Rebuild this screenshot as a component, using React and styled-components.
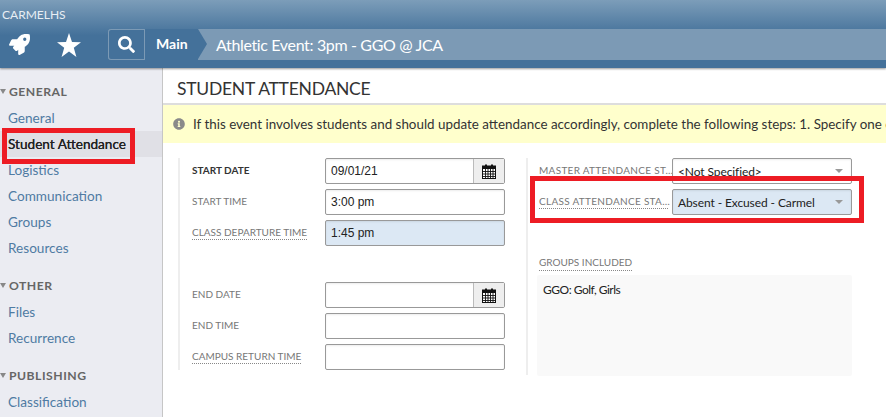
import React from "react";
import styled, { createGlobalStyle } from "styled-components";
import { FaRocket, FaSearch, FaInfoCircle } from "react-icons/fa";

const GlobalStyle = createGlobalStyle`
  html, body {
    margin: 0;
    padding: 0;
    height: 100%;
    overflow: hidden;
    background: #fff;
    font-family: Lato, "Noto Sans", sans-serif;
  }
  * { box-sizing: border-box; }
`;

const Page = styled.div`
  width: 886px;
  height: 417px;
  overflow: hidden;
  display: flex;
  flex-direction: column;
`;

const Header = styled.header`
  height: 68px;
  flex: none;
  background: linear-gradient(#7c9db9, #44719a 52%, #44719a);
  box-shadow: 0 1px 2px rgba(0, 0, 0, 0.4);
  position: relative;
  z-index: 2;
`;

const School = styled.div`
  height: 29px;
  padding: 7px 0 0 2px;
  color: #e8eef4;
  font-size: 12px;
  line-height: 15px;
`;

const NavRow = styled.div`
  display: flex;
  align-items: center;
  height: 31px;
`;

const NavIcons = styled.div`
  width: 108px;
  flex: none;
  display: flex;
  align-items: center;
  gap: 27px;
  padding-left: 9px;
  color: #fff;
`;

const Crumbs = styled.div`
  flex: 1;
  height: 31px;
  display: flex;
  align-items: center;
  background: #7c9ab5;
  border-radius: 3px 0 0 3px;
  color: #fff;
`;

const SearchBtn = styled.div`
  width: 37px;
  height: 31px;
  display: flex;
  align-items: center;
  justify-content: center;
  background: #44719a;
  border: 1px solid #7c9ab5;
  border-radius: 3px 0 0 3px;
`;

const MainCrumb = styled.div`
  position: relative;
  height: 31px;
  width: 53px;
  padding-left: 11px;
  background: #44719a;
  font-size: 14px;
  font-weight: 700;
  line-height: 30px;

  &::after {
    content: "";
    position: absolute;
    left: 100%;
    top: 0;
    border-top: 15.5px solid transparent;
    border-bottom: 15.5px solid transparent;
    border-left: 9px solid #44719a;
  }
`;

const EventTitle = styled.div`
  margin-left: 18px;
  font-size: 16px;
  letter-spacing: -0.35px;
  line-height: 30px;
  white-space: nowrap;
`;

const Body = styled.div`
  flex: 1;
  display: flex;
  min-height: 0;
`;

const Sidebar = styled.nav`
  position: relative;
  width: 163px;
  flex: none;
  background: #ebecf2;
  border-right: 1px solid #c6c6c6;
  padding-top: 12px;
`;

const Section = styled.div`
  margin-bottom: 13px;
`;

const SectionTitle = styled.div`
  position: relative;
  height: 25px;
  padding-left: 9px;
  color: #666;
  font-size: 12.2px;
  font-weight: 700;
  letter-spacing: 0.5px;
  line-height: 23px;

  &::before {
    content: "";
    position: absolute;
    left: 0;
    top: 9px;
    border-left: 3px solid transparent;
    border-right: 3px solid transparent;
    border-top: 5px solid #888;
  }
`;

const NavItem = styled.div`
  height: 26px;
  padding-left: 8px;
  font-size: 13.6px;
  line-height: 26px;
  color: ${(p) => (p.$active ? "#222" : "#4f7ba3")};
  background: ${(p) => (p.$active ? "#e0e0e6" : "transparent")};
  white-space: nowrap;
  ${(p) => p.$active && "text-shadow: 0 0 0.5px #222;"}
`;

const NavHighlight = styled.div`
  position: absolute;
  left: 2px;
  top: 60px;
  width: 133px;
  height: 36px;
  border: 5px solid #ed1c24;
`;

const Content = styled.main`
  flex: 1;
  min-width: 0;
  display: flex;
  flex-direction: column;
`;

const Title = styled.h1`
  margin: 0;
  height: 37px;
  padding-left: 14px;
  border-bottom: 2px solid #ddd;
  color: #333;
  font-size: 17.5px;
  font-weight: 400;
  letter-spacing: -0.25px;
  line-height: 42px;
  flex: none;
`;

const Notice = styled.div`
  height: 38px;
  display: flex;
  align-items: center;
  gap: 8px;
  padding-left: 10px;
  background: #ffffcc;
  color: #333;
  font-size: 13.4px;
  white-space: nowrap;
  overflow: hidden;
  flex: none;

  svg {
    flex: none;
    color: #8a8a8a;
  }
`;

const Columns = styled.div`
  display: flex;
  padding: 15px 0 0 15px;
`;

const LeftColumn = styled.div`
  width: 348px;
  height: 212px;
  padding-left: 12px;
  border-left: 2px solid #eee;
`;

const RightColumn = styled.div`
  position: relative;
  width: 326px;
  height: 217px;
  padding-left: 11px;
  border-left: 2px solid #eee;
`;

const Row = styled.div`
  display: flex;
  align-items: center;
  height: 26px;
  margin-bottom: 5px;
`;

const Label = styled.div`
  color: ${(p) => (p.$strong ? "#333" : "#777")};
  font-size: 10px;
  font-weight: ${(p) => (p.$strong ? 700 : 400)};
  letter-spacing: ${(p) => (p.$cut ? "0.3px" : "0")};
  line-height: 13px;
  white-space: nowrap;
  border-bottom: 1px dotted ${(p) => (p.$hint ? "#888" : "transparent")};
  ${(p) => p.$cut && "width: 129px;"}
`;

const LabelCell = styled.div`
  width: 133px;
  flex: none;
  display: flex;
`;

const Field = styled.div`
  width: 180px;
  height: 26px;
  flex: none;
  display: flex;
  align-items: center;
  padding-left: 5px;
  border: 1px solid #999;
  border-radius: 2px;
  background: ${(p) => (p.$filled ? "#dce8f4" : "#fff")};
  box-shadow: inset 0 1px 2px rgba(0, 0, 0, 0.08);
  color: #222;
  font-family: "Liberation Sans", Arial, sans-serif;
  font-size: 12px;
  position: relative;
`;

const Select = styled(Field)`
  font-family: Lato, "Noto Sans", sans-serif;
  letter-spacing: -0.1px;
`;

const CalendarAddon = styled.div`
  position: absolute;
  top: 0;
  right: 0;
  bottom: 0;
  width: 31px;
  display: flex;
  align-items: center;
  justify-content: center;
  background: #eee;
  border-left: 1px solid #bbb;
`;

const Caret = styled.span`
  position: absolute;
  right: 8px;
  top: 10px;
  border-left: 4px solid transparent;
  border-right: 4px solid transparent;
  border-top: 4px solid #999;
`;

const Spacer = styled.div`
  height: ${(p) => p.$height}px;
`;

const FieldHighlight = styled.div`
  position: absolute;
  left: 2px;
  top: 18px;
  width: 334px;
  height: 47px;
  border: 5px solid #ed1c24;
`;

const GroupsLabel = styled.div`
  display: flex;
  margin-top: 41px;
  height: 15px;
`;

const GroupsBox = styled.div`
  width: 315px;
  height: 101px;
  margin: 4px 0 0 -2px;
  padding: 7px 6px;
  background: #f9f9f9;
  border-radius: 2px;
  color: #222;
  font-size: 12px;
  letter-spacing: -0.5px;
  line-height: 15px;
`;

const Star = () => (
  <svg width="24" height="24" viewBox="0 0 24 24" fill="#fff">
    <polygon points="12,0 15,8.9 24,9.2 16.8,14.8 19.4,24 12,18.6 4.6,24 7.2,14.8 0,9.2 9,8.9" />
  </svg>
);

const Calendar = () => (
  <svg width="14" height="15" viewBox="0 0 14 15">
    <rect x="0.5" y="2" width="13" height="12.5" fill="#fff" stroke="#111" />
    <rect x="0" y="2" width="14" height="3" fill="#111" />
    <rect x="3" y="0.5" width="2" height="3" fill="#111" />
    <rect x="9" y="0.5" width="2" height="3" fill="#111" />
    <path
      d="M3.5 5v9M6 5v9M8.5 5v9M11 5v9M0 7.5h14M0 10h14M0 12.5h14"
      stroke="#111"
      strokeWidth="0.9"
      fill="none"
    />
  </svg>
);

const DateField = ({ value }) => (
  <Field>
    {value}
    <CalendarAddon>
      <Calendar />
    </CalendarAddon>
  </Field>
);

const FormRow = ({ label, strong, hint, cut, children }) => (
  <Row>
    <LabelCell>
      <Label $strong={strong} $hint={hint} $cut={cut}>
        {label}
      </Label>
    </LabelCell>
    {children}
  </Row>
);

export default function App() {
  return (
    <Page>
      <GlobalStyle />
      <Header>
        <School>CARMELHS</School>
        <NavRow>
          <NavIcons>
            <FaRocket size={21} />
            <Star />
          </NavIcons>
          <Crumbs>
            <SearchBtn>
              <FaSearch size={17} />
            </SearchBtn>
            <MainCrumb>Main</MainCrumb>
            <EventTitle>Athletic Event: 3pm - GGO @ JCA</EventTitle>
          </Crumbs>
        </NavRow>
      </Header>
      <Body>
        <Sidebar>
          <Section>
            <SectionTitle>GENERAL</SectionTitle>
            <NavItem>General</NavItem>
            <NavItem $active>Student Attendance</NavItem>
            <NavItem>Logistics</NavItem>
            <NavItem>Communication</NavItem>
            <NavItem>Groups</NavItem>
            <NavItem>Resources</NavItem>
          </Section>
          <Section>
            <SectionTitle>OTHER</SectionTitle>
            <NavItem>Files</NavItem>
            <NavItem>Recurrence</NavItem>
          </Section>
          <Section>
            <SectionTitle>PUBLISHING</SectionTitle>
            <NavItem>Classification</NavItem>
          </Section>
          <NavHighlight />
        </Sidebar>
        <Content>
          <Title>STUDENT ATTENDANCE</Title>
          <Notice>
            <FaInfoCircle size={12} />
            If this event involves students and should update attendance accordingly, complete the following steps: 1. Specify one or more
          </Notice>
          <Columns>
            <LeftColumn>
              <FormRow label="START DATE" strong>
                <DateField value="09/01/21" />
              </FormRow>
              <FormRow label="START TIME">
                <Field>3:00 pm</Field>
              </FormRow>
              <FormRow label="CLASS DEPARTURE TIME" hint>
                <Field $filled>1:45 pm</Field>
              </FormRow>
              <Spacer $height={31} />
              <FormRow label="END DATE">
                <DateField />
              </FormRow>
              <FormRow label="END TIME">
                <Field />
              </FormRow>
              <FormRow label="CAMPUS RETURN TIME" hint>
                <Field />
              </FormRow>
            </LeftColumn>
            <RightColumn>
              <FormRow label="MASTER ATTENDANCE ST…" cut>
                <Select>
                  &lt;Not Specified&gt;
                  <Caret />
                </Select>
              </FormRow>
              <FormRow label="CLASS ATTENDANCE STA…" hint cut>
                <Select $filled>
                  Absent - Excused - Carmel
                  <Caret />
                </Select>
              </FormRow>
              <GroupsLabel>
                <Label $hint>GROUPS INCLUDED</Label>
              </GroupsLabel>
              <GroupsBox>GGO: Golf, Girls</GroupsBox>
              <FieldHighlight />
            </RightColumn>
          </Columns>
        </Content>
      </Body>
    </Page>
  );
}
